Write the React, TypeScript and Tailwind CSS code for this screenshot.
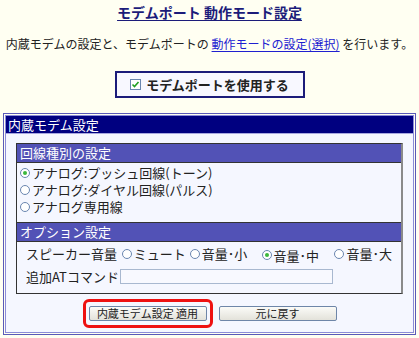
import React from 'react';

const font = { fontFamily: '"Noto Sans CJK JP", "Noto Sans", sans-serif' };

function Radio({ checked, label }: { checked?: boolean; label: string }) {
  return (
    <span className="inline-flex h-[17px] items-center whitespace-nowrap leading-[15px]">
      <span className="mr-[2px] flex h-[10px] w-[10px] items-center justify-center rounded-full border border-[#6a86b0] bg-white">
        {checked && <span className="h-[4px] w-[4px] rounded-full bg-[#3cb83c]" />}
      </span>
      {label}
    </span>
  );
}

export default function App() {
  return (
    <div className="h-[338px] w-[419px] bg-[#fffff2] text-[12px] leading-[16px] text-[#222]" style={font}>
      {/* Title */}
      <div className="flex justify-center pt-[3px]">
        <span className="text-[14px] font-bold leading-[18px] text-[#1c1c7a] underline underline-offset-2">
          モデムポート 動作モード設定
        </span>
      </div>

      {/* Description */}
      <div className="mt-[15px] flex justify-center whitespace-nowrap text-[12px]">
        内蔵モデムの設定と、モデムポートの&nbsp;
        <span className="text-[#2020d0] underline underline-offset-2">動作モードの設定(選択)</span>
        &nbsp;を行います。
      </div>

      {/* Enable button */}
      <div className="mt-[19px] flex justify-center">
        <div className="flex h-[27px] w-[190px] items-center justify-center border-2 border-[#1c1c7a] bg-[#f8f8ff] text-[13px] font-bold">
          <span className="mr-[5px] flex h-[11px] w-[11px] items-center justify-center border border-[#6a86b0] bg-white">
            <svg width="9" height="9" viewBox="0 0 9 9">
              <path d="M1.5 4.5 L3.5 6.5 L7.5 2" stroke="#22a022" strokeWidth="1.6" fill="none" />
            </svg>
          </span>
          モデムポートを使用する
        </div>
      </div>

      {/* Main panel */}
      <div className="mx-[3px] mt-[15px] border border-[#5a5ab8] p-[1px] text-[13px]">
        <div className="border border-[#8c8cd8]">
          <div className="bg-[#000080] px-[2px] text-[13px] leading-[17px] text-white">内蔵モデム設定</div>
          <div className="border-t border-[#a8a8e0] bg-[#f5f7ff] px-[10px] pt-[9px] pb-[4px]">
            <div className="border-t border-l border-b border-[#333] border-r-2 border-r-[#8a8a8a]">
              <div className="border-b border-[#333] bg-[#5252b6] px-[3px] leading-[18px] text-white">回線種別の設定</div>
              <div className="flex flex-col px-[3px] pt-[1px] pb-[7px]">
                <Radio checked label="アナログ:プッシュ回線(トーン)" />
                <Radio label="アナログ:ダイヤル回線(パルス)" />
                <Radio label="アナログ専用線" />
              </div>
              <div className="border-y border-[#333] bg-[#5252b6] px-[3px] leading-[18px] text-white">オプション設定</div>
              <div className="flex flex-col gap-[5px] px-[9px] pt-[2px] pb-[8px]">
                <div className="flex items-center whitespace-nowrap">
                  <span className="w-[96px]">スピーカー音量</span>
                  <span className="w-[68px]"><Radio label="ミュート" /></span>
                  <span className="w-[72px]"><Radio label="音量･小" /></span>
                  <span className="w-[73px]"><Radio checked label="音量･中" /></span>
                  <Radio label="音量･大" />
                </div>
                <div className="flex items-center">
                  <span className="w-[94px] whitespace-nowrap">追加ATコマンド</span>
                  <span className="h-[15px] w-[213px] border border-[#a8b8d0] bg-[#f8f9ff]" />
                </div>
              </div>
            </div>
            <div className="mt-[5px] flex items-center justify-center gap-[6px]">
              <div className="rounded-[6px] border-[3px] border-[#ee1111] px-[3px] py-[4px]">
                <button className="block h-[15px] w-[118px] rounded-[2px] border border-[#6e86a8] bg-gradient-to-b from-[#fbfbf8] to-[#e3e2da] text-[11px] leading-[13px]">
                  内蔵モデム設定 適用
                </button>
              </div>
              <button className="block h-[15px] w-[118px] rounded-[2px] border border-[#6e86a8] bg-gradient-to-b from-[#fbfbf8] to-[#e3e2da] text-[11px] leading-[13px]">
                元に戻す
              </button>
            </div>
          </div>
        </div>
      </div>
    </div>
  );
}
